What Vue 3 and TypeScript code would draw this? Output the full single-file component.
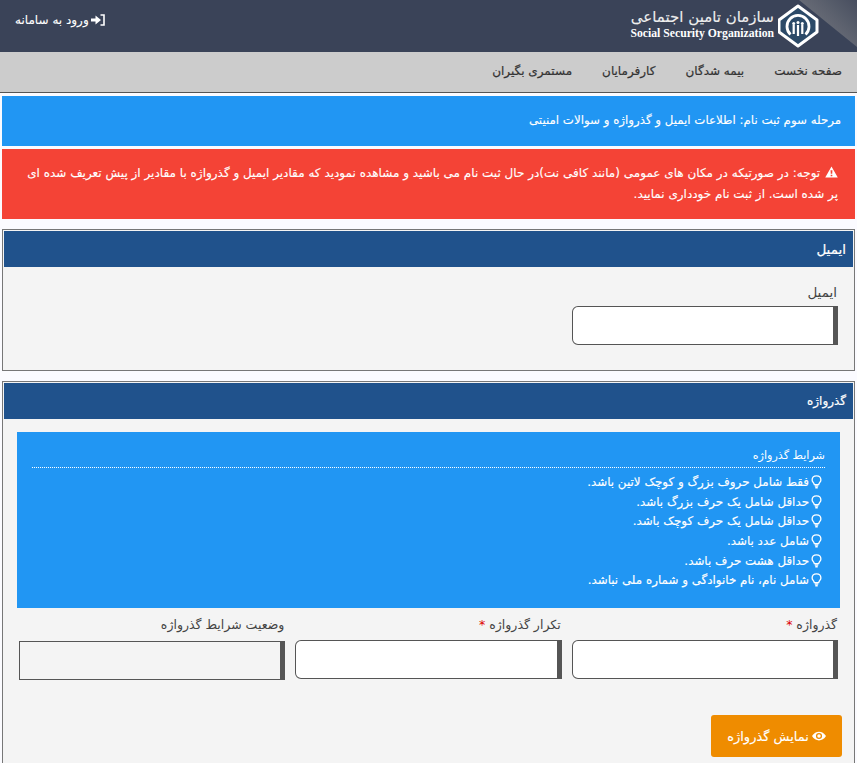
<script setup lang="ts">
const rules: string[] = [
  'فقط شامل حروف بزرگ و کوچک لاتین باشد.',
  'حداقل شامل یک حرف بزرگ باشد.',
  'حداقل شامل یک حرف کوچک باشد.',
  'شامل عدد باشد.',
  'حداقل هشت حرف باشد.',
  'شامل نام، نام خانوادگی و شماره ملی نباشد.',
]
const nav: string[] = ['صفحه نخست', 'بیمه شدگان', 'کارفرمایان', 'مستمری بگیران']
</script>

<template>
  <div class="page" dir="rtl">
    <header class="top">
      <div class="brand">
        <svg class="logo" viewBox="0 0 42 44" width="42" height="44">
          <path d="M20 2 L39 16 V28 L20 42 L1 28 V16 Z" fill="#2c4a68" stroke="#fff" stroke-width="3" stroke-linejoin="round" />
          <path d="M12.5 30.5 A11 11 0 1 1 27.5 30.5" fill="none" stroke="#fff" stroke-width="2.8" />
          <rect x="14.6" y="21" width="2.2" height="9" fill="#fff" />
          <rect x="18.9" y="21" width="2.2" height="11" fill="#fff" />
          <rect x="23.2" y="21" width="2.2" height="9" fill="#fff" />
          <circle cx="15.7" cy="19.5" r="1.5" fill="#fff" />
          <circle cx="20" cy="18.5" r="1.5" fill="#fff" />
          <circle cx="24.3" cy="19.5" r="1.5" fill="#fff" />
        </svg>
        <div class="brand-text">
          <div class="brand-fa">سازمان تامین اجتماعی</div>
          <div class="brand-en" dir="ltr">Social Security Organization</div>
        </div>
      </div>
      <a class="login">
        <svg viewBox="0 0 14 12" width="14" height="12">
          <path d="M0 4.5 H4.5 V1.5 L10 6 L4.5 10.5 V7.5 H0 Z" fill="#fff" />
          <path d="M9.5 1 H13 V11 H9.5" fill="none" stroke="#fff" stroke-width="1.6" />
        </svg>
        <span>ورود به سامانه</span>
      </a>
    </header>

    <nav class="nav">
      <a v-for="item in nav" :key="item">{{ item }}</a>
    </nav>

    <div class="step">مرحله سوم ثبت نام: اطلاعات ایمیل و گذرواژه و سوالات امنیتی</div>

    <div class="alert">
      <svg viewBox="0 0 14 13" width="13" height="12" class="warn">
        <path fill-rule="evenodd" d="M7 .5 L13.8 12.5 H.2 Z M6 4.5 L6.2 8.5 H7.8 L8 4.5 Z M6.1 9.5 V11 H7.9 V9.5 Z" fill="#fff" />
      </svg>
      توجه: در صورتیکه در مکان های عمومی (مانند کافی نت)در حال ثبت نام می باشید و مشاهده نمودید که مقادیر ایمیل و گذرواژه با مقادیر از پیش تعریف شده ای پر شده است. از ثبت نام خودداری نمایید.
    </div>

    <section class="panel mail">
      <h2>ایمیل</h2>
      <div class="mail-body">
        <label class="field">
          <span class="lbl">ایمیل</span>
          <span class="input"></span>
        </label>
      </div>
    </section>

    <section class="panel pass">
      <h2>گذرواژه</h2>
      <div class="pass-body">
        <div class="info">
          <div class="info-title">شرایط گذرواژه</div>
          <div v-for="r in rules" :key="r" class="rule">
            <svg viewBox="0 0 12 16" width="11" height="14">
              <path d="M6 1 C3 1 1 3 1 5.6 C1 8 3 8.6 3.5 11 H8.5 C9 8.6 11 8 11 5.6 C11 3 9 1 6 1 Z" fill="none" stroke="#fff" stroke-width="1.5" />
              <path d="M4 12.6 H8 M4.6 14.6 H7.4" stroke="#fff" stroke-width="1.5" />
            </svg>
            <span>{{ r }}</span>
          </div>
        </div>
        <div class="row">
          <label class="field">
            <span class="lbl">گذرواژه <i>*</i></span>
            <span class="input"></span>
          </label>
          <label class="field">
            <span class="lbl">تکرار گذرواژه <i>*</i></span>
            <span class="input"></span>
          </label>
          <label class="field">
            <span class="lbl">وضعیت شرایط گذرواژه</span>
            <span class="input off"></span>
          </label>
        </div>
        <button class="show" type="button">
          <svg viewBox="0 0 16 11" width="14" height="10">
            <path fill-rule="evenodd" d="M0 5.5 C2 2 5 .5 8 .5 C11 .5 14 2 16 5.5 C14 9 11 10.5 8 10.5 C5 10.5 2 9 0 5.5 Z M8 2 A3.5 3.5 0 1 0 8 9 A3.5 3.5 0 1 0 8 2 Z" fill="#fff" />
            <circle cx="8" cy="5.5" r="2" fill="#fff" />
          </svg>
          <span>نمایش گذرواژه</span>
        </button>
      </div>
    </section>
  </div>
</template>

<style>
html, body { margin: 0; height: 100%; overflow: hidden; background: #fbfbff; }
</style>

<style scoped>
.page {
  width: 857px;
  height: 763px;
  overflow: hidden;
  font-family: "DejaVu Sans", sans-serif;
  font-size: 12px;
  color: #333;
}
.top {
  position: relative;
  height: 52px;
  display: flex;
  justify-content: space-between;
  align-items: center;
  padding: 0 37px 0 15px;
  box-sizing: border-box;
  background: #3a4358;
}
.top::before {
  content: "";
  position: absolute;
  top: 0;
  right: 0;
  width: 58px;
  height: 47px;
  background: linear-gradient(45deg, #6f737d 0%, #666a75 45%, #474e5f 100%);
  clip-path: polygon(0 0, 100% 0, 100% 100%);
}
.brand { position: relative; display: flex; align-items: center; gap: 4px; }
.brand-text { text-align: center; color: #fff; padding-bottom: 4px; }
.brand-fa { font-size: 15px; line-height: 20px; color: #eee; -webkit-text-stroke: 0.1px #eee; }
.brand-en { font-family: "Liberation Serif", serif; font-weight: 700; font-size: 11.7px; line-height: 14px; }
.login { display: flex; align-items: center; gap: 2px; color: #fff; font-size: 12px; margin-bottom: 12px; -webkit-text-stroke: 0.1px #fff; }
.nav {
  height: 41px;
  box-sizing: border-box;
  background: #ccc;
  border-bottom: 1px solid #555;
  display: flex;
  align-items: center;
  gap: 30px;
  padding: 0 15px 2px 0;
  color: #333;
  font-size: 12px;
  -webkit-text-stroke: 0.2px #333;
}
.step {
  margin: 3px 2px 0 2px;
  height: 50px;
  box-sizing: border-box;
  background: #2196f3;
  color: #fff;
  display: flex;
  align-items: center;
  padding: 0 14px 2px 0;
  font-size: 11.8px;
  -webkit-text-stroke: 0.12px #fff;
}
.alert {
  margin: 3px 2px 0;
  height: 70px;
  box-sizing: border-box;
  background: #f44336;
  color: #fff;
  padding: 14px 17px;
  line-height: 21px;
  font-size: 12px;
  -webkit-text-stroke: 0.12px #fff;
}
.warn { margin-left: 1px; vertical-align: -1px; }
.panel {
  margin: 10px 2px 0;
  border: 1px solid #777;
  background: #f4f4f4;
}
.panel h2 {
  margin: 1px 1px 0;
  height: 36px;
  background: #20528c;
  color: #fff;
  font-size: 12px;
  font-weight: 400;
  -webkit-text-stroke: 0.2px #fff;
  line-height: 36px;
  padding-right: 7px;
}
.mail h2 { font-size: 13.5px; }
.mail { height: 140px; }
.mail-body { padding: 12px 16px 0; }
.mail-body .field { width: 266px; }
.mail-body .lbl { font-size: 13.5px; margin-bottom: 1px; }
.field { display: block; flex: 1; }
.lbl { display: block; font-size: 12.5px; line-height: 26px; color: #444; padding-right: 1px; margin-bottom: 2px; }
.lbl i { color: #d00; font-style: normal; }
.input {
  display: block;
  height: 39px;
  box-sizing: border-box;
  background: #fff;
  border: 1px solid #555;
  border-right: 5px solid #555;
  border-top-left-radius: 6px;
  border-bottom-left-radius: 6px;
}
.input.off { background: #f4f4f4; border-radius: 0; margin-top: 3px; }
.pass { height: 400px; }
.pass-body { padding: 13px 14px 0; }
.info {
  background: #2196f3;
  color: #fff;
  height: 176px;
  padding: 15px 15px 0;
  box-sizing: border-box;
}
.info-title {
  padding-bottom: 2px;
  border-bottom: 1px dotted #fff;
  line-height: 18px;
  margin-bottom: 4px;
  font-size: 11.2px;
}
.rule {
  display: flex;
  align-items: center;
  gap: 2px;
  height: 19.7px;
  font-size: 11.9px;
  -webkit-text-stroke: 0.15px #fff;
  padding-right: 3px;
}
.row { display: flex; gap: 10px; margin-top: 4px; padding: 0 2px; }
.show {
  display: flex;
  align-items: center;
  gap: 3px;
  margin: 35px -2px 0 0;
  width: 131px;
  height: 42px;
  justify-content: center;
  border: 0;
  border-radius: 3px;
  background: #ef8c00;
  color: #fff;
  font-family: inherit;
  font-size: 13px;
  -webkit-text-stroke: 0.12px #fff;
}
</style>
